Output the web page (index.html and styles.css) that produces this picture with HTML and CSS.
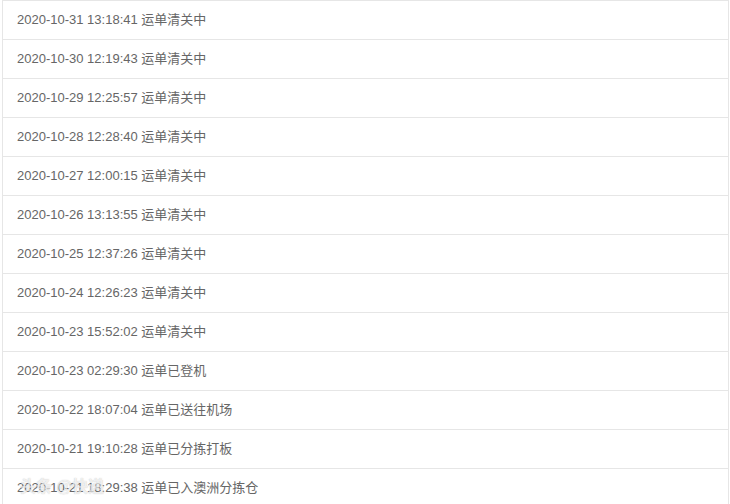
FILE: index.html
```html
<!DOCTYPE html>
<html lang="zh-CN">
<head>
    <meta charset="UTF-8">
    <meta name="viewport" content="width=device-width, initial-scale=1.0">
    <title>运单轨迹</title>
    <link rel="stylesheet" href="styles.css">
</head>
<body>
    <ul class="track-list">
        <li class="track-item">2020-10-31 13:18:41 运单清关中</li>
        <li class="track-item">2020-10-30 12:19:43 运单清关中</li>
        <li class="track-item">2020-10-29 12:25:57 运单清关中</li>
        <li class="track-item">2020-10-28 12:28:40 运单清关中</li>
        <li class="track-item">2020-10-27 12:00:15 运单清关中</li>
        <li class="track-item">2020-10-26 13:13:55 运单清关中</li>
        <li class="track-item">2020-10-25 12:37:26 运单清关中</li>
        <li class="track-item">2020-10-24 12:26:23 运单清关中</li>
        <li class="track-item">2020-10-23 15:52:02 运单清关中</li>
        <li class="track-item">2020-10-23 02:29:30 运单已登机</li>
        <li class="track-item">2020-10-22 18:07:04 运单已送往机场</li>
        <li class="track-item">2020-10-21 19:10:28 运单已分拣打板</li>
        <li class="track-item">2020-10-21 18:29:38 运单已入澳洲分拣仓</li>
    </ul>
    <div class="watermark">头条 @快递</div>
</body>
</html>
```

FILE: styles.css
```css
body {
    margin: 0;
    padding: 0 2px;
    background: #fff;
    font-family: "Liberation Sans", Arial, "Noto Sans CJK SC", sans-serif;
    font-size: 13px;
    color: #666;
}
.track-list {
    list-style: none;
    margin: 0;
    padding: 0;
    width: 727px;
}
.track-item {
    padding: 10px 14px;
    line-height: 18px;
    border: 1px solid #e6e6e6;
    margin-bottom: -1px;
    background: #fff;
}
/* faint logo stamped over the bottom-left corner */
.watermark {
    position: absolute;
    left: 20px;
    top: 477px;
    font-size: 16px;
    font-weight: bold;
    line-height: 20px;
    color: rgba(255, 255, 255, 0.75);
    text-shadow: 0 0 1px rgba(120, 120, 120, 0.6);
    opacity: 0.8;
}
```
